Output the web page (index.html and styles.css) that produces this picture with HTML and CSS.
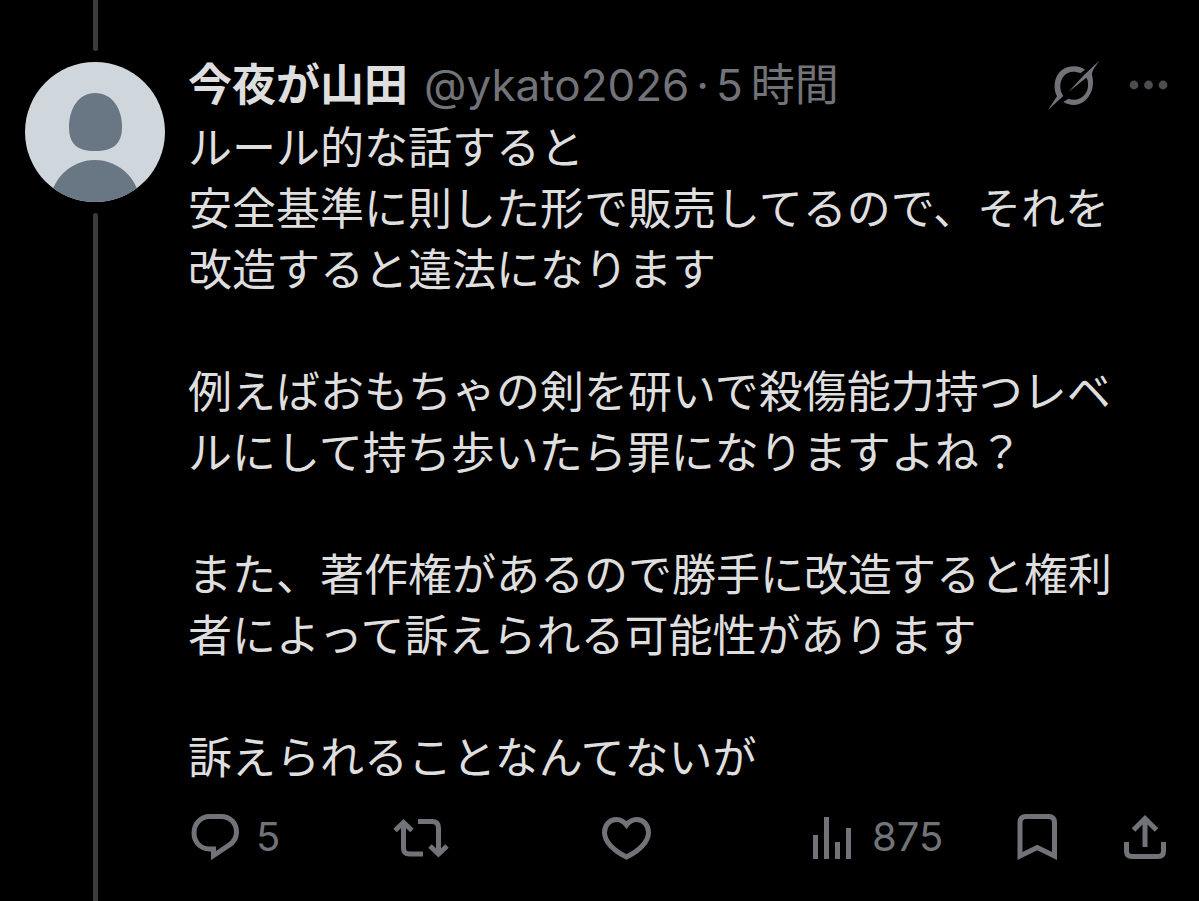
FILE: index.html
```html
<!DOCTYPE html>
<html lang="ja">
<head>
    <meta charset="UTF-8">
    <meta name="viewport" content="width=device-width, initial-scale=1.0">
    <title>今夜が山田</title>
    <link rel="stylesheet" href="styles.css">
</head>
<body>
    <article class="post">
        <div class="thread">
            <div class="thread-line thread-line-top"></div>
            <svg class="avatar" viewBox="0 0 140 140" aria-hidden="true">
                <clipPath id="avatarClip"><circle cx="70" cy="70" r="70"/></clipPath>
                <g clip-path="url(#avatarClip)">
                    <rect width="140" height="140" fill="#cfd6dc"/>
                    <path d="M70 31C87 31 97 46 97 65C97 82 88 89 70 89S44 82 44 65C44 46 54 31 70 31Z" fill="#697683"/>
                    <circle cx="70" cy="143" r="45" fill="#697683"/>
                </g>
            </svg>
            <div class="thread-line thread-line-bottom"></div>
        </div>

        <div class="content">
            <header class="post-header">
                <span class="name">今夜が山田</span>
                <span class="handle">@ykato2026</span>
                <span class="dot">·</span>
                <span class="time"><span>5</span><span>時間</span></span>
                <button class="icon-button grok" aria-label="Grok">
                    <svg width="53" height="51" viewBox="54 57 159 153" fill="currentColor">
                        <path d="M57 207L84 166C66 130 82 76 135 76C150 76 160 80 168 86L154 97C120 82 92 105 94 140C95 152 99 158 103 165Z"/>
                        <path d="M103 183L118 173C150 185 180 160 177 128C177 118 175 114 172 110L118 153L165 102L211 59C195 82 186 92 190 106C200 150 172 192 135 192C122 192 112 188 103 183Z"/>
                    </svg>
                </button>
                <button class="icon-button more" aria-label="もっと見る">
                    <svg width="40" height="12" viewBox="0 0 40 12" fill="currentColor">
                        <circle cx="6" cy="5" r="4.4"/>
                        <circle cx="20.5" cy="5" r="4.4"/>
                        <circle cx="35" cy="5" r="4.4"/>
                    </svg>
                </button>
            </header>

            <div class="text">
                <p>ルール的な話すると<br>安全基準に則した形で販売してるので、それを改造すると違法になります</p>
                <p>例えばおもちゃの剣を研いで殺傷能力持つレベルにして持ち歩いたら罪になりますよね？</p>
                <p>また、著作権があるので勝手に改造すると権利者によって訴えられる可能性があります</p>
                <p>訴えられることなんてないが</p>
            </div>

            <footer class="actions">
                <button class="icon-button" aria-label="返信 5">
                    <svg class="icon" width="50" height="48" viewBox="0 0 50 48">
                        <path d="M18.5 3.5H30C39.5 3.5 45.5 10.500 45.5 19C45.5 25 42.5 29.5 37.500 32.5L22.5 42.5V36H18.5C9.5 36 3 29 3 20S9.5 3.5 18.5 3.5Z"/>
                    </svg>
                    <span>5</span>
                </button>
                <button class="icon-button" aria-label="リポスト">
                    <svg class="icon" width="56" height="48" viewBox="0 0 56 48">
                        <path d="M2 17.5L10.5 9.5L19 17.5M10.5 10V35Q10.5 41 16.5 41H30M25 8.5H39Q45.5 8.5 45.5 15V41M37 33L45.5 41L54 33"/>
                    </svg>
                </button>
                <button class="icon-button" aria-label="いいね">
                    <svg class="icon" width="50" height="48" viewBox="0 0 50 48">
                        <path d="M24.5 12C21.5 8 18 6.5 14.5 6.5C7.5 6.5 2.5 12 2.5 19.5C2.5 29 12 38 24.5 44C37 38 46.5 29 46.5 19.5C46.5 12 41.5 6.5 34.5 6.5C31 6.5 27.5 8 24.5 12Z"/>
                    </svg>
                </button>
                <button class="icon-button" aria-label="表示 875">
                    <svg class="icon" width="45" height="48" viewBox="0 0 45 48">
                        <path d="M3.5 22V46M14.5 4V46M25.5 29V46M36.5 15V46"/>
                    </svg>
                    <span>875</span>
                </button>
                <button class="icon-button" aria-label="ブックマーク">
                    <svg class="icon" width="41" height="48" viewBox="0 0 41 48">
                        <path d="M3 43V9.5Q3 3.5 9 3.5H31.5Q37.5 3.5 37.5 9.5V43L20.25 34.5Z"/>
                    </svg>
                </button>
                <button class="icon-button" aria-label="共有">
                    <svg class="icon" width="43" height="48" viewBox="0 0 43 48">
                        <path d="M9.5 17L21 5.5L32.5 17M21 6V34M2.5 29V38Q2.5 43.5 8 43.5H34Q39.5 43.5 39.5 38V29"/>
                    </svg>
                </button>
            </footer>
        </div>
    </article>
</body>
</html>
```

FILE: styles.css
```css
body {
    margin: 0;
    background-color: #000;
    color: #dedede;
    font-family: Inter, "Noto Sans CJK JP", sans-serif;
    font-size: 44px;
    line-height: 61px;
}
.post {
    display: flex;
    gap: 23px;
    min-height: 100vh;
    box-sizing: border-box;
    padding: 0 32px 0 25px;
}
.thread {
    display: flex;
    flex-direction: column;
    align-items: center;
    gap: 11px;
    flex: none;
}
.thread-line {
    width: 5px;
    background-color: #3c3c3f;
}
.thread-line-top {
    height: 51px;
    border-radius: 0 0 3px 3px;
}
.thread-line-bottom {
    flex: 1;
    border-radius: 3px 3px 0 0;
}
.avatar {
    display: block;
    width: 140px;
    height: 140px;
}
.content {
    flex: 1;
    min-width: 0;
    padding: 55px 0 33px;
}
.post-header {
    display: flex;
    align-items: center;
    height: 61px;
    color: #717379;
    white-space: nowrap;
}
.name {
    color: #dedede;
    font-weight: 700;
    margin-right: 16px;
}
.dot {
    margin: 0 7px;
}
.time {
    display: flex;
    gap: 8px;
}
.text {
    padding: 2px 32px 0 0;
}
.text p {
    margin: 0 0 61px;
}
.text p:last-child {
    margin-bottom: 0;
}
.icon-button {
    display: flex;
    align-items: center;
    gap: 15px;
    padding: 0;
    border: none;
    background: none;
    color: #717379;
    font-family: inherit;
    font-size: 40px;
    line-height: 48px;
    cursor: pointer;
}
.grok {
    margin-left: auto;
}
.more {
    margin-left: 28px;
    margin-right: -1px;
    color: #4c4d51;
}
.actions {
    display: grid;
    grid-template-columns: 202fr 209fr 210fr 205fr 107fr auto;
    padding: 24px 0 0 3px;
}
.icon {
    fill: none;
    stroke: currentColor;
    stroke-width: 5px;
}
```
